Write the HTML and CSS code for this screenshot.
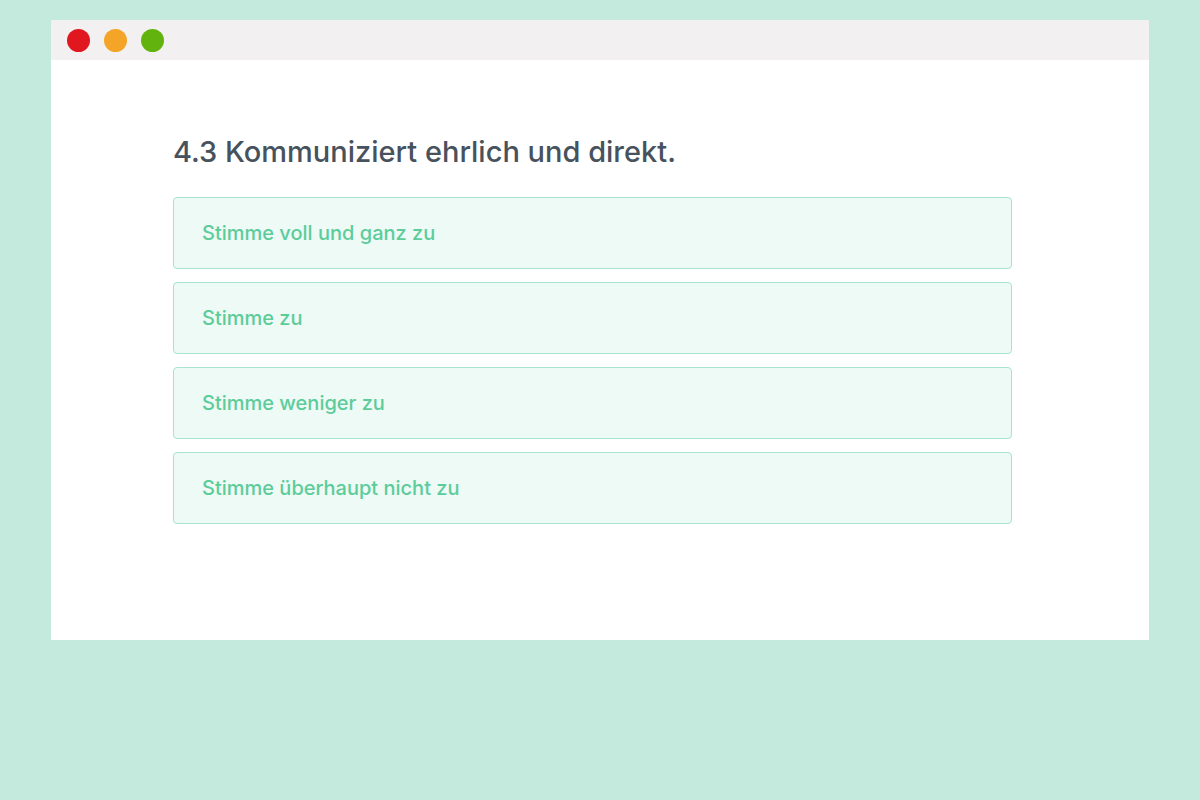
FILE: index.html
```html
<!DOCTYPE html>
<html lang="de">
<head>
<meta charset="UTF-8" />
<meta name="viewport" content="width=device-width, initial-scale=1" />
<title>Umfrage</title>
<link rel="stylesheet" href="styles.css">
</head>
<body>
  <div class="window">
    <div class="titlebar">
      <span class="dot red"></span>
      <span class="dot orange"></span>
      <span class="dot green"></span>
    </div>
    <div class="content">
      <h1 class="question">4.3 Kommuniziert ehrlich und direkt.</h1>
      <div class="options">
        <button class="option">Stimme voll und ganz zu</button>
        <button class="option">Stimme zu</button>
        <button class="option">Stimme weniger zu</button>
        <button class="option">Stimme überhaupt nicht zu</button>
      </div>
    </div>
  </div>
</body>
</html>
```

FILE: styles.css
```css
:root {
  --bg: #c4eadd;
  --bar: #f2f0f1;
  --heading: #47525d;
  --accent: #5ccc9b;
  --option-bg: #edfaf5;
  --option-border: #a9e3cc;
}

body {
  background-color: var(--bg);
  font-family: Inter, 'Open Sans', sans-serif;
  margin: 0;
  padding: 20px 51px;
}

.window {
  background: #fff;
  height: 620px;
}

.titlebar {
  background: var(--bar);
  height: 40px;
  display: flex;
  align-items: center;
  gap: 14px;
  padding-left: 16px;
}

.dot {
  width: 23px;
  height: 23px;
  border-radius: 50%;
}
.dot.red { background: #e0171f; }
.dot.orange { background: #f4a527; }
.dot.green { background: #63b30f; }

.content {
  padding: 74px 137px 0 122px;
}

.question {
  margin: 0 0 27px;
  font-size: 29px;
  font-weight: 500;
  color: var(--heading);
  line-height: 36px;
}

.options {
  display: flex;
  flex-direction: column;
  gap: 13px;
}

.option {
  height: 72px;
  text-align: left;
  padding: 0 0 0 28px;
  background: var(--option-bg);
  border: 1px solid var(--option-border);
  border-radius: 4px;
  color: var(--accent);
  font-family: inherit;
  font-size: 20px;
  font-weight: 500;
  cursor: pointer;
}
```
